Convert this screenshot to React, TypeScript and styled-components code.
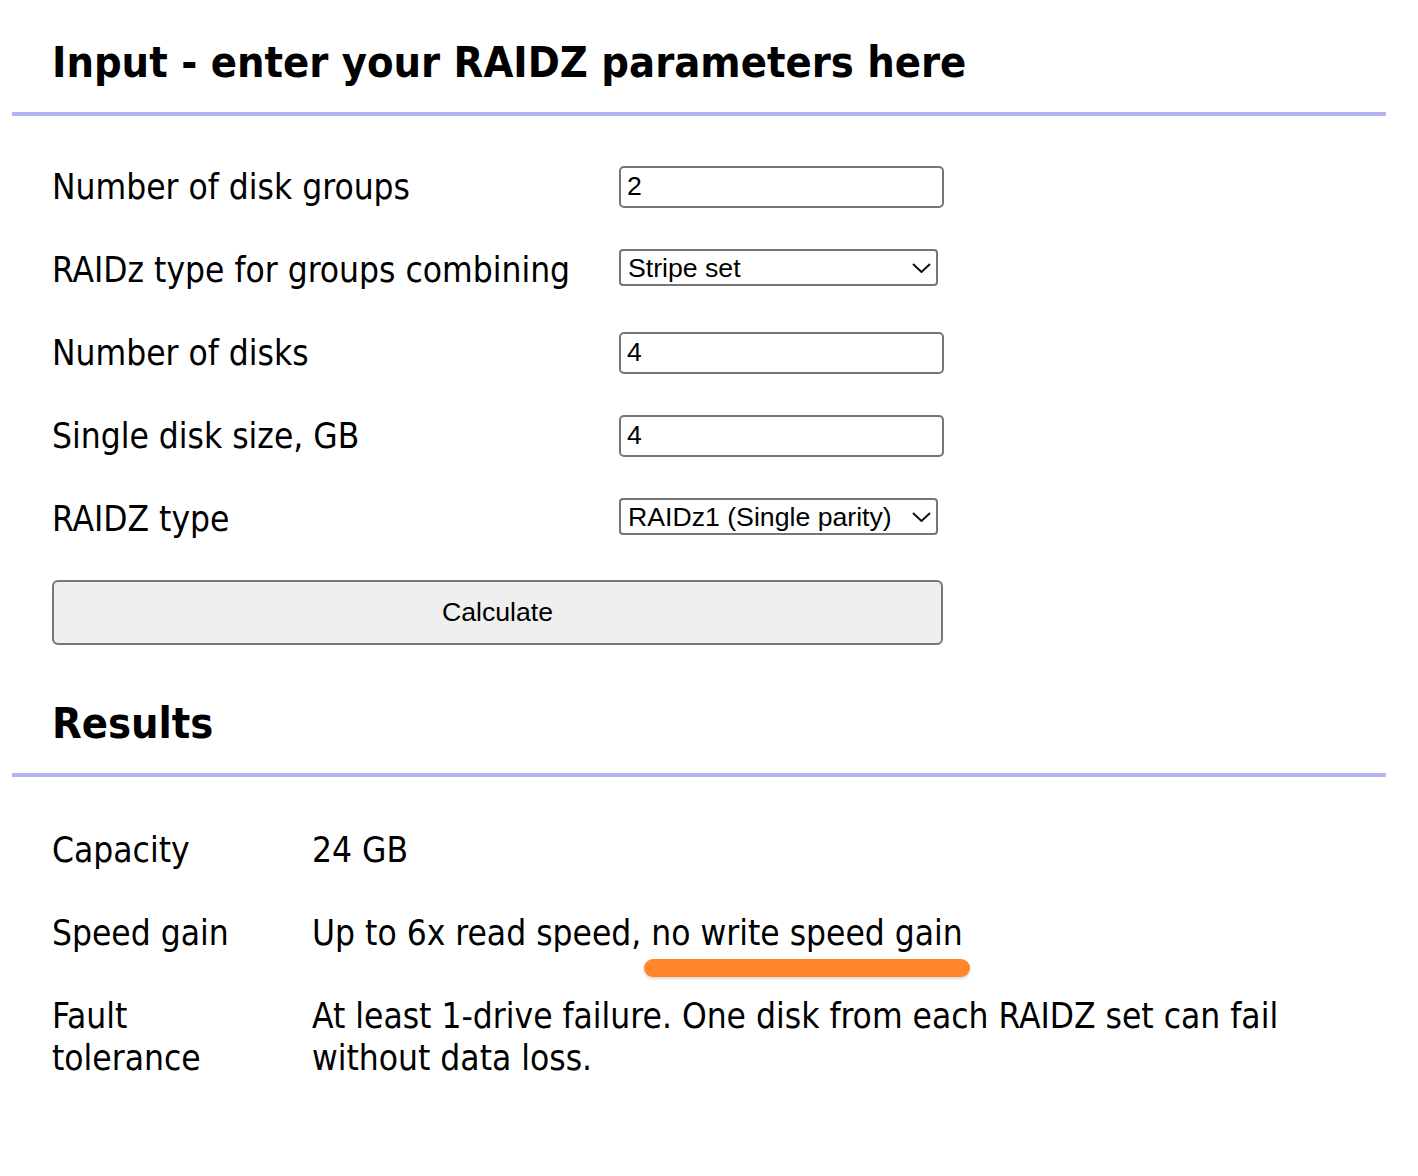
import React from "react";
import styled, { createGlobalStyle } from "styled-components";

const GlobalStyle = createGlobalStyle`
  html, body { margin: 0; padding: 0; background: #ffffff; }
  body {
    font-family: "DejaVu Sans Condensed", "DejaVu Sans", Tahoma, sans-serif;
    font-stretch: condensed;
    color: #000000;
  }
`;

const Page = styled.main`
  padding: 0 32px 60px 12px;
`;

const SectionTitle = styled.h2<{ $top: number }>`
  margin: 0;
  padding: ${(p) => p.$top}px 0 24px 40px;
  font-size: 43px;
  line-height: 52px;
  font-weight: bold;
  border-bottom: 4px solid #b4b4f4;
`;

const Form = styled.form`
  padding: 29px 0 0 40px;
  width: 891px;
`;

const FieldRow = styled.div`
  display: grid;
  grid-template-columns: 567px 1fr;
  align-items: center;
  height: 83px;
`;

const Label = styled.label`
  font-size: 35px;
  line-height: 42px;
`;

const TextInput = styled.input`
  box-sizing: border-box;
  width: 325px;
  height: 42px;
  border: 2px solid #767676;
  border-radius: 5px;
  padding: 0 6px;
  font-family: "Liberation Sans", Arial, sans-serif;
  font-size: 26.67px;
  color: #000;
  background: #fff;
  outline: none;
`;

const SelectWrap = styled.div`
  position: relative;
  width: 319px;
  height: 37px;
  margin-bottom: 4px;
`;

const Select = styled.select`
  box-sizing: border-box;
  appearance: none;
  -webkit-appearance: none;
  width: 100%;
  height: 100%;
  border: 2px solid #767676;
  border-radius: 4px;
  padding: 0 30px 0 7px;
  font-family: "Liberation Sans", Arial, sans-serif;
  font-size: 26.67px;
  color: #000;
  background: #fff;
  outline: none;
`;

const Chevron = styled.svg`
  position: absolute;
  right: 7px;
  top: 14px;
  width: 19px;
  height: 10px;
  pointer-events: none;
`;

const Button = styled.button`
  display: block;
  box-sizing: border-box;
  width: 891px;
  height: 65px;
  margin: 20px 0 13px;
  border: 2px solid #767676;
  border-radius: 6px;
  background: #efefef;
  font-family: "Liberation Sans", Arial, sans-serif;
  font-size: 26.67px;
  color: #000;
`;

const ResultsGrid = styled.dl`
  display: grid;
  grid-template-columns: 220px 1fr;
  column-gap: 40px;
  row-gap: 41px;
  margin: 0;
  padding: 52px 0 0 40px;
  font-size: 35px;
  line-height: 42px;
`;

const Term = styled.dt`
  margin: 0;
`;

const Value = styled.dd`
  margin: 0;
`;

const Highlight = styled.span`
  position: relative;
  &::after {
    content: "";
    position: absolute;
    left: -7px;
    right: -7px;
    bottom: -24px;
    height: 18px;
    border-radius: 9px;
    background: #ff8629;
    box-shadow: 0 2px 3px rgba(0, 0, 0, 0.15);
  }
`;

const ChevronIcon = () => (
  <Chevron viewBox="0 0 19 10">
    <path d="M1 1 L9.5 9 L18 1" fill="none" stroke="#111" strokeWidth="2" />
  </Chevron>
);

export default function App() {
  return (
    <Page>
      <GlobalStyle />
      <SectionTitle $top={36}>Input - enter your RAIDZ parameters here</SectionTitle>
      <Form onSubmit={(e) => e.preventDefault()}>
        <FieldRow>
          <Label htmlFor="groups">Number of disk groups</Label>
          <TextInput id="groups" defaultValue="2" />
        </FieldRow>
        <FieldRow>
          <Label htmlFor="combine">RAIDz type for groups combining</Label>
          <SelectWrap>
            <Select id="combine" defaultValue="stripe">
              <option value="stripe">Stripe set</option>
              <option value="mirror">Mirror</option>
            </Select>
            <ChevronIcon />
          </SelectWrap>
        </FieldRow>
        <FieldRow>
          <Label htmlFor="disks">Number of disks</Label>
          <TextInput id="disks" defaultValue="4" />
        </FieldRow>
        <FieldRow>
          <Label htmlFor="size">Single disk size, GB</Label>
          <TextInput id="size" defaultValue="4" />
        </FieldRow>
        <FieldRow>
          <Label htmlFor="type">RAIDZ type</Label>
          <SelectWrap>
            <Select id="type" defaultValue="z1">
              <option value="z1">RAIDz1 (Single parity)</option>
              <option value="z2">RAIDz2 (Double parity)</option>
              <option value="z3">RAIDz3 (Triple parity)</option>
            </Select>
            <ChevronIcon />
          </SelectWrap>
        </FieldRow>
        <Button type="submit">Calculate</Button>
      </Form>
      <SectionTitle $top={39}>Results</SectionTitle>
      <ResultsGrid>
        <Term>Capacity</Term>
        <Value>24 GB</Value>
        <Term>Speed gain</Term>
        <Value>
          Up to 6x read speed, <Highlight>no write speed gain</Highlight>
        </Value>
        <Term>Fault tolerance</Term>
        <Value>At least 1-drive failure. One disk from each RAIDZ set can fail without data loss.</Value>
      </ResultsGrid>
    </Page>
  );
}
